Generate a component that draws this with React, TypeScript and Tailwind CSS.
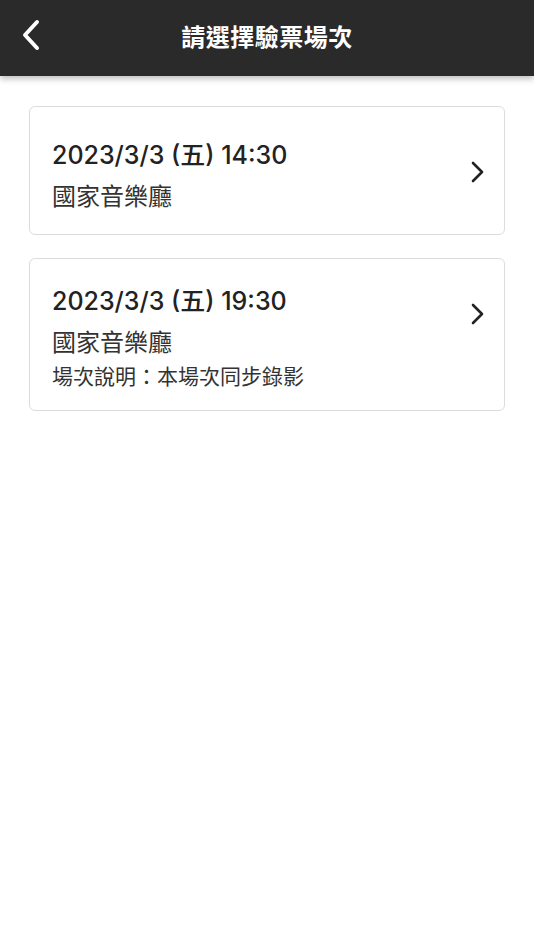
import * as React from 'react';

interface Session {
  date: string;
  venue: string;
  note?: string;
}

const sessions: Session[] = [
  { date: '2023/3/3 (五) 14:30', venue: '國家音樂廳' },
  { date: '2023/3/3 (五) 19:30', venue: '國家音樂廳', note: '場次說明：本場次同步錄影' },
];

const font = "[font-family:Inter,'Noto_Sans_CJK_TC',sans-serif]";

function ChevronLeft() {
  return (
    <svg width="22" height="32" viewBox="0 0 22 32" fill="none">
      <path d="M17 3 L5 16 L17 29" stroke="white" strokeWidth="4" strokeLinecap="round" strokeLinejoin="round" />
    </svg>
  );
}

function ChevronRight() {
  return (
    <svg width="16" height="22" viewBox="0 0 16 22" fill="none">
      <path d="M3 2 L12 11 L3 20" stroke="#222" strokeWidth="2.6" strokeLinecap="round" strokeLinejoin="round" />
    </svg>
  );
}

function SessionCard({ session }: { session: Session }) {
  const hasNote = !!session.note;
  return (
    <button
      type="button"
      className={`flex w-full items-start justify-between rounded-[6px] border border-[#dcdcdc] bg-white pl-[22px] pr-[18px] text-left ${hasNote ? 'pt-[25px] pb-[18px]' : 'pt-[31px] pb-[20px]'}`}
    >
      <div className="flex flex-col">
        <div className="text-[25px] leading-[34px] font-medium text-[#222]">{session.date}</div>
        <div className="mt-[8px] text-[24px] leading-[34px] text-[#333]">{session.venue}</div>
        {hasNote && <div className="mt-[2px] text-[21px] leading-[30px] text-[#333]">{session.note}</div>}
      </div>
      <div className={hasNote ? 'mt-[19px]' : 'mt-[23px]'}>
        <ChevronRight />
      </div>
    </button>
  );
}

export default function App() {
  return (
    <div className={`min-h-[950px] w-full bg-white ${font}`}>
      <header className="relative flex h-[76px] items-center justify-center bg-[#2a2a2a] shadow-[0_3px_6px_rgba(0,0,0,0.25)]">
        <button type="button" className="absolute left-[20px] top-[19px]" aria-label="返回">
          <ChevronLeft />
        </button>
        <h1 className="text-[24px] font-bold text-white tracking-[0.5px]">請選擇驗票場次</h1>
      </header>
      <main className="flex flex-col gap-[23px] px-[29px] pt-[30px]">
        {sessions.map((s) => (
          <SessionCard key={s.date} session={s} />
        ))}
      </main>
    </div>
  );
}
